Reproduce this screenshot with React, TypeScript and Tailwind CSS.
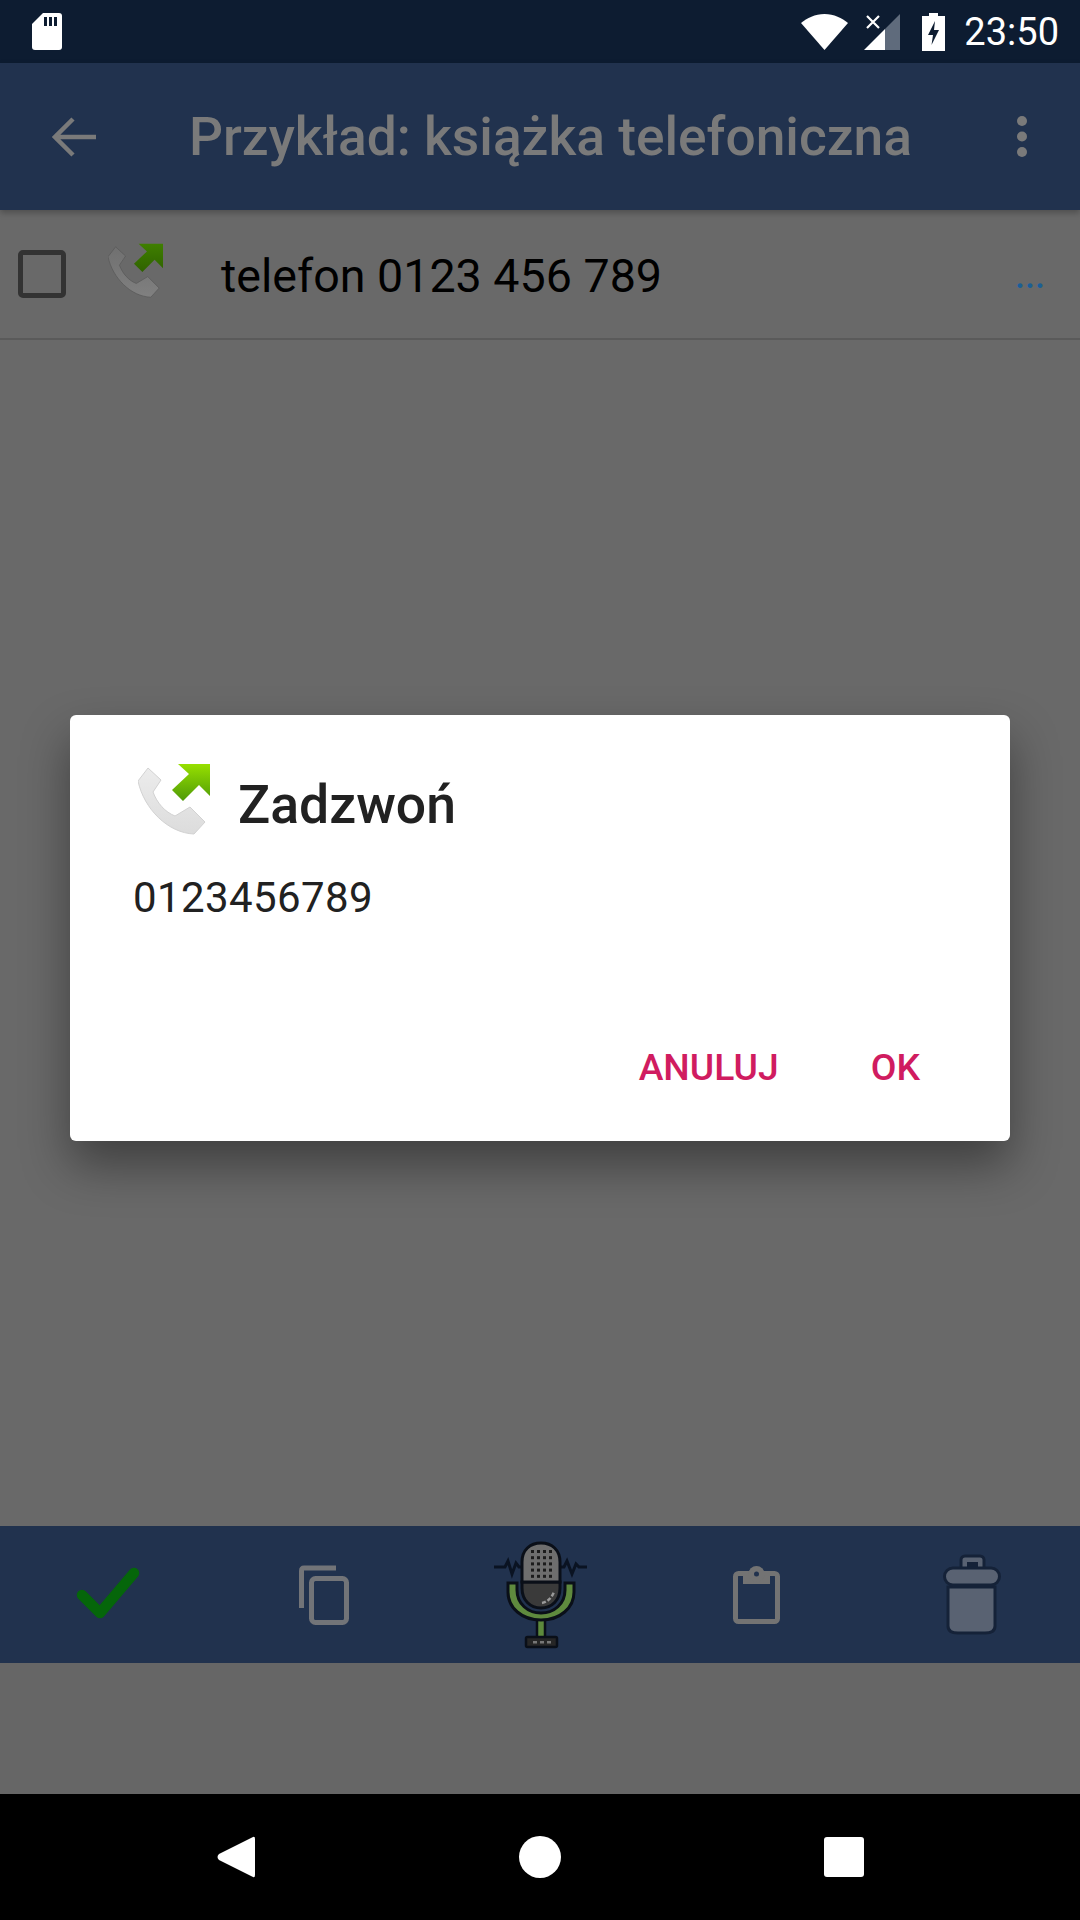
import React from "react";

function CallIcon({ dim = false, size = 72 }: { dim?: boolean; size?: number }) {
  const id = dim ? "dim" : "lit";
  return (
    <svg width={size} height={size} viewBox="0 0 72 72">
      <defs>
        <linearGradient id={"arrow-" + id} x1="0" y1="0" x2="0" y2="1">
          <stop offset="0" stopColor={dim ? "#3f7f00" : "#97e000"} />
          <stop offset="1" stopColor={dim ? "#2f6200" : "#4f9a08"} />
        </linearGradient>
        <linearGradient id={"phone-" + id} x1="0" y1="0" x2="0" y2="1">
          <stop offset="0" stopColor={dim ? "#707070" : "#ececec"} />
          <stop offset="1" stopColor={dim ? "#808080" : "#dcdcdc"} />
        </linearGradient>
      </defs>
      <path
        d="M10 5 L23 17 L15 29 C19 40 27 49 37 53 L52 44 L67 59 L56 71 C30 70 6 46 0 18 Z"
        fill={"url(#phone-" + id + ")"}
        stroke={dim ? "#595959" : "#d2d2d2"}
        strokeWidth="1"
        strokeLinejoin="round"
      />
      <path d="M40 1 L72 1 L72 33 L61 22 L45 38 L34 27 L51 11 Z" fill={"url(#arrow-" + id + ")"} />
    </svg>
  );
}

function MicIcon() {
  const dots = [];
  for (let r = 0; r < 5; r++) {
    for (let c = 0; c < 4; c++) {
      dots.push(<rect key={r + "-" + c} x={61 + c * 6} y={20 + r * 6.2} width="3" height="3" fill="#1c1c1c" />);
    }
  }
  return (
    <svg width="140" height="130" viewBox="0 0 140 130">
      <path d="M24 37 H35 L38 31 L42 44 L46 33 L49 37 H52" fill="none" stroke="#0a1322" strokeWidth="3" />
      <path d="M90 37 H94 L97 31 L102 44 L106 34 L109 37 H117" fill="none" stroke="#0a1322" strokeWidth="3" />
      <path d="M67 88 H75 V108 H67 Z" fill="#5d8a3c" stroke="#0a0f18" strokeWidth="2.5" />
      <path
        d="M38 53 H47 V60 C47 74 58 83 71 83 C84 83 95 74 95 60 V53 H104 V62 C104 78 90 90 71 90 C52 90 38 78 38 62 Z"
        fill="#5f8a3e"
        stroke="#0a0f18"
        strokeWidth="3"
      />
      <path d="M52 52 H90 V58 C90 70 82 78 71 78 C60 78 52 70 52 58 Z" fill="#3a3a3a" stroke="#0a0f18" strokeWidth="3" />
      <path d="M52 52 V32 C52 20 60 13 71 13 C82 13 90 20 90 32 V52 Z" fill="#6e6e6e" stroke="#0a0f18" strokeWidth="3" />
      {dots}
      <path d="M72 73 C78 72 82 67 84 62" fill="none" stroke="#9a9a9a" strokeWidth="2.5" strokeDasharray="4 2" />
      <rect x="56" y="107" width="31" height="10" rx="1.5" fill="#262626" stroke="#0a0f18" strokeWidth="2.5" />
      <rect x="63" y="111" width="4" height="2.5" fill="#777" />
      <rect x="70" y="111" width="4" height="2.5" fill="#777" />
      <rect x="77" y="111" width="4" height="2.5" fill="#777" />
    </svg>
  );
}

export default function App() {
  return (
    <div className="w-[1080px] h-[1920px] flex flex-col overflow-hidden bg-[#666666] font-['Roboto',sans-serif]">
      {/* status bar */}
      <div className="h-[63px] shrink-0 bg-[#0d1c31] flex items-center justify-between pl-[32px] pr-[21px]">
        <svg width="30" height="37" viewBox="0 0 30 37">
          <path d="M11 0 H27 Q30 0 30 3 V34 Q30 37 27 37 H3 Q0 37 0 34 V11 Z" fill="#fff" />
          <rect x="12" y="4" width="3" height="9" fill="#0d1c31" />
          <rect x="17" y="4" width="3" height="9" fill="#0d1c31" />
          <rect x="22" y="4" width="3" height="9" fill="#0d1c31" />
        </svg>
        <div className="flex items-center">
          <svg width="47" height="36" viewBox="0 0 47 36">
            <path d="M23.5 36 L0 9 C6 4 14 0 23.5 0 C33 0 41 4 47 9 Z" fill="#fff" />
          </svg>
          <svg className="ml-[16px]" width="36" height="36" viewBox="0 0 36 36">
            <path d="M36 0 V36 H21 V15 Z" fill="#5f6b7c" />
            <path d="M21 15 V36 H0 Z" fill="#fff" />
            <path d="M3 2 L15 14 M15 2 L3 14" stroke="#fff" strokeWidth="2.2" />
          </svg>
          <svg className="ml-[22px]" width="23" height="38" viewBox="0 0 23 38">
            <path d="M7 0 H16 V3 H23 V38 H0 V3 H7 Z" fill="#fff" />
            <path d="M13 8 L6 22 H11 L9.5 32 L17 17 H12 Z" fill="#0d1c31" />
          </svg>
          <span className="ml-[19px] text-[38px] leading-none text-white">23:50</span>
        </div>
      </div>

      {/* everything under the dialog scrim */}
      <div className="relative flex-1 flex flex-col">
        <div className="relative z-10 h-[147px] shrink-0 bg-[#21324e] flex items-center pl-[52px] pr-[53px] shadow-[0_3px_6px_rgba(0,0,0,0.25)]">
          <svg width="44" height="40" viewBox="0 0 44 40">
            <path d="M44 20 H4 M21 2 L3 20 L21 38" fill="none" stroke="#7a7a7a" strokeWidth="4.5" />
          </svg>
          <span className="ml-[93px] mt-[2px] flex-1 text-[53.3px] leading-none font-medium text-[#7a7a7a] whitespace-nowrap">
            Przykład: książka telefoniczna
          </span>
          <svg width="10" height="41" viewBox="0 0 10 41">
            <circle cx="5" cy="5" r="5" fill="#7a7a7a" />
            <circle cx="5" cy="20.5" r="5" fill="#7a7a7a" />
            <circle cx="5" cy="36" r="5" fill="#7a7a7a" />
          </svg>
        </div>

        <div className="h-[130px] shrink-0 flex items-center bg-[#696969] border-b-2 border-[#5a5a5a] pl-[18px] pr-[35px]">
          <div className="w-[48px] h-[48px] rounded-[5px] border-[5px] border-[#333333]" />
          <div className="ml-[42px] -mt-[8px]">
            <CallIcon dim size={55} />
          </div>
          <span className="ml-[58px] mt-[4px] flex-1 text-[46.6px] leading-none text-black whitespace-nowrap">telefon 0123 456 789</span>
          <span className="text-[36px] leading-none font-medium text-[#1b5f96] mt-[4px]">...</span>
        </div>

        <div className="flex-1 bg-[#696969]" />

        <div className="h-[137px] shrink-0 bg-[#21324e] grid grid-cols-5 items-center justify-items-center">
          <svg width="64" height="56" viewBox="0 0 64 56">
            <path d="M6 28 L24 46 L58 6" fill="none" stroke="#05660a" strokeWidth="10.5" strokeLinecap="round" strokeLinejoin="round" />
          </svg>
          <svg width="50" height="60" viewBox="0 0 50 60">
            <path d="M37 3 H5 Q2.5 3 2.5 6 V43" fill="none" stroke="#727478" strokeWidth="5" />
            <rect x="12.5" y="13.5" width="35" height="44" rx="4" fill="none" stroke="#727478" strokeWidth="5" />
          </svg>
          <MicIcon />
          <svg width="47" height="58" viewBox="0 0 47 58">
            <rect x="2.5" y="7.5" width="42" height="48" rx="3" fill="none" stroke="#737373" strokeWidth="5" />
            <path d="M10 5 H37 V18 H10 Z" fill="#737373" />
            <circle cx="23.5" cy="8" r="8" fill="#737373" />
            <circle cx="23.5" cy="8" r="2.5" fill="#21324e" />
          </svg>
          <svg width="58" height="82" viewBox="0 0 58 82">
            <path d="M5 33 H52 V72 Q52 79 42 79 H15 Q5 79 5 72 Z" fill="#596272" stroke="#152238" strokeWidth="3" />
            <rect x="18" y="2" width="23" height="16" rx="4" fill="#596272" stroke="#152238" strokeWidth="3" />
            <rect x="24" y="8" width="11" height="5" fill="#152238" />
            <rect x="1.5" y="14" width="55" height="17" rx="8.5" fill="#596272" stroke="#152238" strokeWidth="3" />
          </svg>
        </div>

        <div className="h-[131px] shrink-0" />

        {/* dialog */}
        <div className="absolute inset-0 z-20 flex items-center justify-center">
          <div className="mb-[2px] w-[940px] h-[426px] bg-white rounded-[6px] flex flex-col pl-[63px] pr-[90px] pt-[48px] shadow-[0_24px_48px_rgba(0,0,0,0.4)]">
            <div className="flex items-center h-[72px]">
              <div className="ml-[5px]">
                <CallIcon />
              </div>
              <span className="ml-[28px] mt-[12px] text-[53.5px] leading-none font-medium text-[#212121]">Zadzwoń</span>
            </div>
            <div className="mt-[42px] text-[42px] leading-none tracking-[0.4px] text-[#212121]">0123456789</div>
            <div className="mt-[130px] flex justify-end gap-[92px] text-[37.3px] leading-none font-medium text-[#d01c60]">
              <span>ANULUJ</span>
              <span>OK</span>
            </div>
          </div>
        </div>
      </div>

      {/* nav bar */}
      <div className="h-[126px] shrink-0 bg-black grid grid-cols-3 items-center px-[84px]">
        <svg className="justify-self-center" width="38" height="42" viewBox="0 0 38 42">
          <path d="M36 1 Q38 0 38 3 V39 Q38 42 36 41 L2 24 Q-1 21 2 18 Z" fill="#fff" />
        </svg>
        <div className="justify-self-center w-[42px] h-[42px] rounded-full bg-white" />
        <div className="justify-self-center w-[40px] h-[40px] rounded-[3px] bg-white" />
      </div>
    </div>
  );
}
